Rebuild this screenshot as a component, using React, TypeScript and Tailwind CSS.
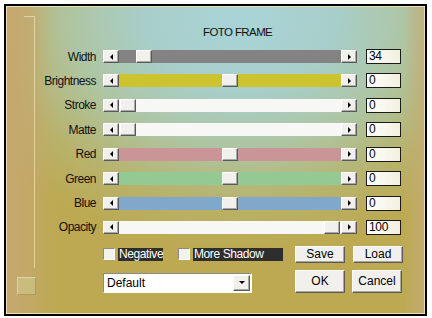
import React from 'react';

type Slider = {
  label: string;
  value: string;
  track: string;
  thumb: number;
};

const SLIDERS: Slider[] = [
  { label: 'Width', value: '34', track: 'bg-[#838383]', thumb: 17 },
  { label: 'Brightness', value: '0', track: 'bg-[#cbc42f]', thumb: 103 },
  { label: 'Stroke', value: '0', track: 'bg-[#f7f7f6]', thumb: 1 },
  { label: 'Matte', value: '0', track: 'bg-[#f7f7f6]', thumb: 1 },
  { label: 'Red', value: '0', track: 'bg-[#c99596]', thumb: 103 },
  { label: 'Green', value: '0', track: 'bg-[#94c994]', thumb: 103 },
  { label: 'Blue', value: '0', track: 'bg-[#80a8cb]', thumb: 103 },
  { label: 'Opacity', value: '100', track: 'bg-[#f7f7f6]', thumb: 205 },
];

const raised =
  'bg-[#f1f0ec] border border-t-white border-l-white border-r-[#5a5a5a] border-b-[#5a5a5a] shadow-[inset_-1px_-1px_0_#a8a8a4]';

const ArrowButton = ({ dir }: { dir: 'left' | 'right' }) => (
  <div className={`w-[16px] h-[13px] flex items-center justify-center ${raised}`}>
    {dir === 'left' ? (
      <div className="w-0 h-0 border-y-[3px] border-y-transparent border-r-[3px] border-r-black" />
    ) : (
      <div className="w-0 h-0 border-y-[3px] border-y-transparent border-l-[3px] border-l-black" />
    )}
  </div>
);

const SliderRow = ({ s }: { s: Slider }) => (
  <div className="flex items-center h-[15px]">
    <div className="w-[60px] text-right text-[12px] tracking-[-0.5px] leading-none text-[#111]">{s.label}</div>
    <div className="ml-[7px] flex">
      <ArrowButton dir="left" />
      <div className={`relative w-[222px] h-[13px] ${s.track}`}>
        <div className={`absolute top-0 w-[16px] h-[13px] ${raised}`} style={{ left: s.thumb }} />
      </div>
      <ArrowButton dir="right" />
    </div>
    <div className="ml-[9px] w-[35px] h-[15px] border border-[#1a1a1a] bg-gradient-to-r from-white to-[#f3efdf] text-[12px] tracking-[-0.3px] leading-[13px] pl-[2px] text-black">
      {s.value}
    </div>
  </div>
);

const Check = ({ label, width }: { label: string; width: number }) => (
  <div className="flex items-center">
    <div className="w-[12px] h-[12px] bg-[#f2f1ea] border border-t-[#8a8a86] border-l-[#8a8a86] border-r-white border-b-white" />
    <div
      className="ml-[3px] h-[13px] bg-[#2e2e2e] text-white text-[12px] tracking-[-0.4px] leading-[13px] px-[1px]"
      style={{ width }}
    >
      {label}
    </div>
  </div>
);

const Button = ({ label, h }: { label: string; h: string }) => (
  <div className={`w-[50px] ${h} flex items-center justify-center text-[12px] text-black ${raised}`}>
    {label}
  </div>
);

export default function App() {
  return (
    <div
      className="w-[432px] h-[318px] bg-white pt-[4px] pl-[4px]"
      style={{ fontFamily: '"Liberation Sans", Arial, sans-serif' }}
    >
      <div className="w-[423px] h-[312px] border-2 border-black bg-[linear-gradient(to_right,#c5a86f_0px,rgba(197,168,111,0.8)_22px,rgba(197,168,111,0)_48px),linear-gradient(to_left,rgba(196,172,118,0.8)_0px,rgba(196,172,118,0)_22px),radial-gradient(ellipse_72%_75%_at_56%_4%,#a9d4d8_0%,#a8cec9_32%,#aec5a2_56%,#b8b26a_80%,#bca952_100%)]">
        <div className="w-full h-full border border-[#eadfb8] flex">
          {/* left decoration */}
          <div className="w-[29px] flex flex-col">
            <div className="mt-[9px] ml-[17px] w-[11px] h-[252px] border-t border-r border-[#e9dcb2]/80" />
            <div className="mt-[9px] ml-[10px] w-[19px] h-[18px] bg-[#c9bc7c] border border-t-[#ddd3a6] border-l-[#ddd3a6] border-r-[#ab9d5c] border-b-[#ab9d5c]" />
          </div>

          {/* main */}
          <div className="flex flex-col">
            <div className="mt-[18px] pl-[167px] text-[11.5px] tracking-[-0.6px] leading-[14px] text-[#111]">FOTO FRAME</div>

            <div className="mt-[10px] flex flex-col gap-[9.43px]">
              {SLIDERS.map((s) => (
                <SliderRow key={s.label} s={s} />
              ))}
            </div>

            <div className="mt-[11px] flex items-center h-[17px] pl-[67px]">
              <Check label="Negative" width={45} />
              <div className="ml-[15px]">
                <Check label="More Shadow" width={90} />
              </div>
              <div className="ml-[12px] flex gap-[8px]">
                <Button label="Save" h="h-[17px]" />
                <Button label="Load" h="h-[17px]" />
              </div>
            </div>

            <div className="mt-[7px] flex items-end h-[23px] pl-[67px]">
              <div className="w-[149px] h-[20px] bg-white border border-t-[#8a8a86] border-l-[#8a8a86] border-r-white border-b-white flex items-center">
                <div className="flex-1 text-[12px] pl-[3px] text-black leading-none">Default</div>
                <div className={`w-[17px] h-[16px] mr-[1px] flex items-center justify-center ${raised}`}>
                  <div className="w-0 h-0 border-x-[3px] border-x-transparent border-t-[3px] border-t-black" />
                </div>
              </div>
              <div className="ml-[43px] flex gap-[7px] self-stretch">
                <Button label="OK" h="h-[23px]" />
                <Button label="Cancel" h="h-[23px]" />
              </div>
            </div>
          </div>
        </div>
      </div>
    </div>
  );
}
